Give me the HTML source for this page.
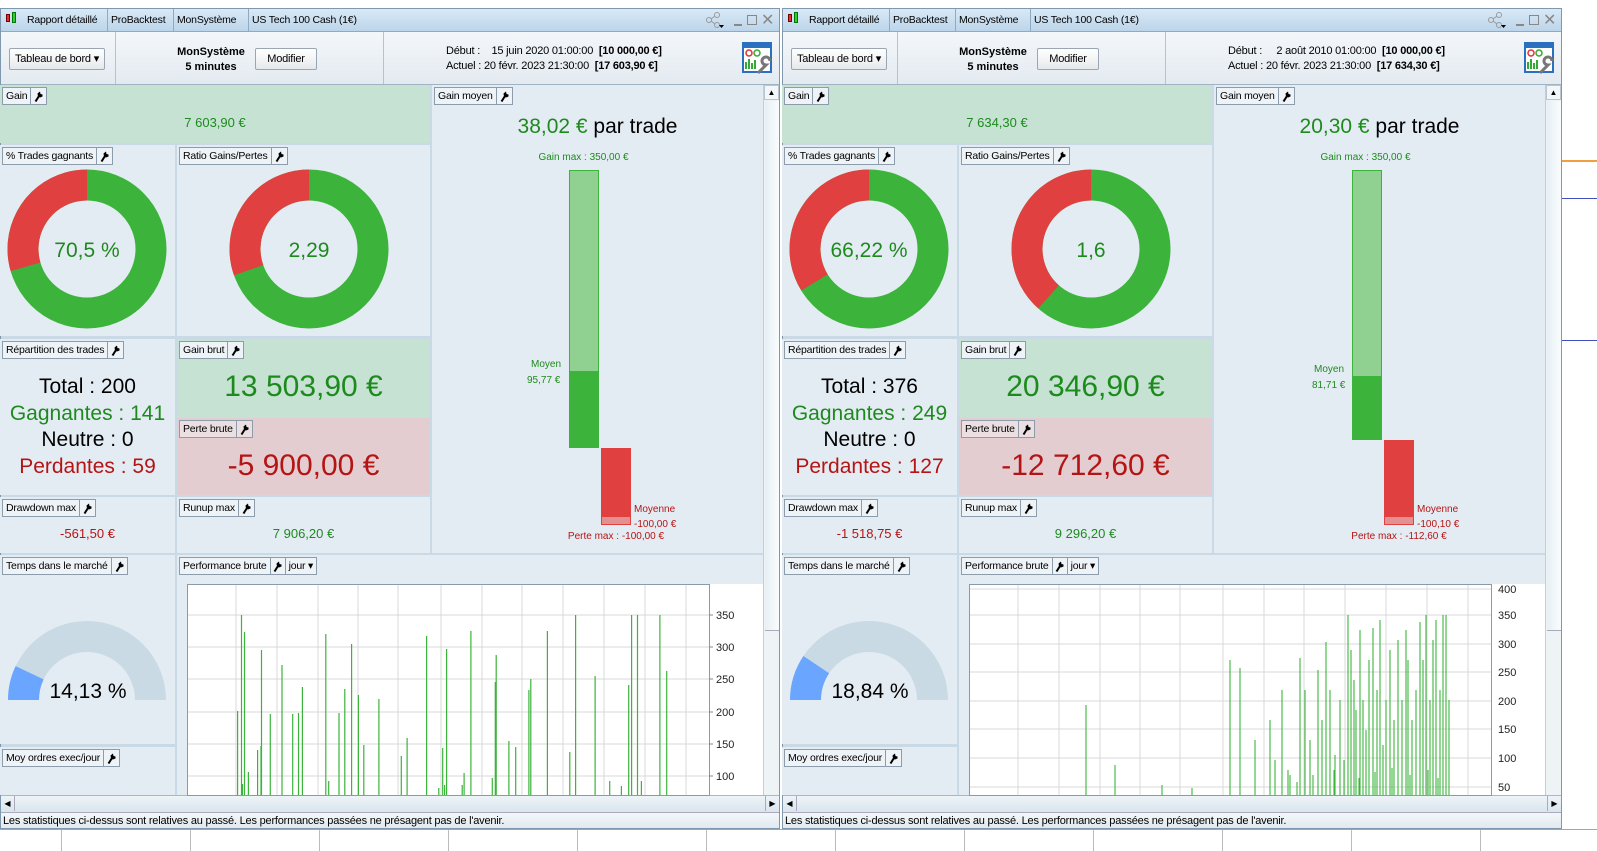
<!DOCTYPE html>
<html><head><meta charset="utf-8"><style>
*{margin:0;padding:0;box-sizing:border-box}
body{width:1597px;height:851px;position:relative;overflow:hidden;background:#fff;font-family:"Liberation Sans",sans-serif;font-size:11px;color:#000}
.a{position:absolute}
.w{position:absolute;top:8px;width:780px;height:821px;background:#c9d9e5;border:1px solid #7f98ae}
.tb{position:absolute;left:0;top:0;width:100%;height:23px;background:linear-gradient(#d8e9f7,#bcd5ea);border-bottom:1px solid #90aac0}
.tab{position:absolute;top:0;height:22px;line-height:22px;border-right:1px solid #90aac0;padding:0 3px;font-size:10.5px;letter-spacing:-0.2px;white-space:nowrap}
.tool{position:absolute;left:0;top:23px;width:100%;height:53px;background:linear-gradient(#f4f7fa,#e3eaf0);border-bottom:1px solid #9fb3c4}
.p{position:absolute;background:#e4ecf3}
.lb{position:absolute;left:2px;top:2px;height:18px;border:1px solid #8c9cab;background:#eef3f7;display:flex;line-height:16px;white-space:nowrap;font-size:10.5px;letter-spacing:-0.2px}
.lb span{padding:0 3px;border-right:1px solid #8c9cab}
.lb i{width:15px;display:flex;align-items:center;justify-content:center}
.c{position:absolute;text-align:center;white-space:nowrap}
.g{color:#1e8a1e}.r{color:#b51414}
.btn{position:absolute;border:1px solid #9aa7b2;border-radius:2px;background:linear-gradient(#fff,#e6e9ec);height:22px;line-height:20px;text-align:center;letter-spacing:-0.2px}
</style></head><body>

<div class="a" style="left:0;top:829px;width:1597px;height:1px;background:#9aa"></div>
<div class="a" style="left:0;top:830px;width:1597px;height:21px;background:repeating-linear-gradient(90deg,#fff 0 61px,#bbb 61px 62px,#fff 62px 129px)"></div>
<div class="a" style="left:1562px;top:160px;width:35px;height:2px;background:#f0a040"></div>
<div class="a" style="left:1562px;top:198px;width:35px;height:1px;background:#4050c0"></div>
<div class="a" style="left:1562px;top:340px;width:35px;height:1px;background:#4050c0"></div>

<div class="w" style="left:0">
 <div class="tb">
  <div class="a" style="left:5px;top:5px;width:4px;height:8px;background:#d33;border:1px solid #700"></div>
  <div class="a" style="left:11px;top:3px;width:4px;height:11px;background:#3c3;border:1px solid #070"></div>
  <div class="tab" style="left:23px;width:84px">Rapport détaillé</div>
  <div class="tab" style="left:107px;width:66px">ProBacktest</div>
  <div class="tab" style="left:173px;width:75px">MonSystème</div>
  <div class="tab" style="left:248px;border:0">US Tech 100 Cash (1€)</div>
  <svg class="a" style="left:704px;top:3px" width="20" height="16"><circle cx="4" cy="8" r="2.5" fill="none" stroke="#999"/><circle cx="12" cy="3" r="2.5" fill="none" stroke="#999"/><circle cx="12" cy="13" r="2.5" fill="none" stroke="#999"/><path d="M6 7L10 4M6 9L10 12" stroke="#999"/><path d="M14 13h5l-2.5 3z" fill="#000"/></svg>
  <div class="a" style="left:733px;top:15px;width:8px;height:2px;background:#888"></div>
  <div class="a" style="left:746px;top:6px;width:10px;height:10px;border:1px solid #888"></div>
  <div class="a" style="left:760px;top:1px;font-size:16px;color:#888">✕</div>
 </div>
 <div class="tool">
  <div class="btn" style="left:8px;top:16px;width:96px">Tableau de bord ▾</div>
  <div class="a" style="left:114px;top:0;width:1px;height:52px;background:#b5c3cf"></div>
  <div class="c" style="left:170px;top:13px;width:80px;font-weight:bold;line-height:15px">MonSystème<br>5 minutes</div>
  <div class="btn" style="left:254px;top:16px;width:62px">Modifier</div>
  <div class="a" style="left:382px;top:0;width:1px;height:52px;background:#b5c3cf"></div>
  <div class="a" style="left:445px;top:12px;line-height:15px;white-space:nowrap;letter-spacing:-0.2px">Début :&nbsp;&nbsp;&nbsp;&nbsp;15 juin 2020 01:00:00&nbsp; <b>[10 000,00 €]</b><br>Actuel : 20 févr. 2023 21:30:00&nbsp; <b>[17 603,90 €]</b></div>
  <svg class="a" style="left:741px;top:10px" width="32" height="34"><rect x="1" y="1" width="28" height="29" fill="#fff" stroke="#2a6fc0" stroke-width="2"/><rect x="1" y="1" width="28" height="5" fill="#2a6fc0"/><circle cx="7" cy="11" r="3" fill="none" stroke="#d33" stroke-width="1.5"/><circle cx="15" cy="11" r="3" fill="none" stroke="#3a3" stroke-width="1.5"/><path d="M4 27V20M7 27V17M10 27V21M13 27V18" stroke="#3a3" stroke-width="2"/><path d="M16 31l8-8a4 4 0 1 1 4-4" stroke="#777" stroke-width="3" fill="none"/></svg>
 </div>
</div>

<div class="w" style="left:782px;width:780px">
 <div class="tb">
  <div class="a" style="left:5px;top:5px;width:4px;height:8px;background:#d33;border:1px solid #700"></div>
  <div class="a" style="left:11px;top:3px;width:4px;height:11px;background:#3c3;border:1px solid #070"></div>
  <div class="tab" style="left:23px;width:84px">Rapport détaillé</div>
  <div class="tab" style="left:107px;width:66px">ProBacktest</div>
  <div class="tab" style="left:173px;width:75px">MonSystème</div>
  <div class="tab" style="left:248px;border:0">US Tech 100 Cash (1€)</div>
  <svg class="a" style="left:704px;top:3px" width="20" height="16"><circle cx="4" cy="8" r="2.5" fill="none" stroke="#999"/><circle cx="12" cy="3" r="2.5" fill="none" stroke="#999"/><circle cx="12" cy="13" r="2.5" fill="none" stroke="#999"/><path d="M6 7L10 4M6 9L10 12" stroke="#999"/><path d="M14 13h5l-2.5 3z" fill="#000"/></svg>
  <div class="a" style="left:733px;top:15px;width:8px;height:2px;background:#888"></div>
  <div class="a" style="left:746px;top:6px;width:10px;height:10px;border:1px solid #888"></div>
  <div class="a" style="left:760px;top:1px;font-size:16px;color:#888">✕</div>
 </div>
 <div class="tool">
  <div class="btn" style="left:8px;top:16px;width:96px">Tableau de bord ▾</div>
  <div class="a" style="left:114px;top:0;width:1px;height:52px;background:#b5c3cf"></div>
  <div class="c" style="left:170px;top:13px;width:80px;font-weight:bold;line-height:15px">MonSystème<br>5 minutes</div>
  <div class="btn" style="left:254px;top:16px;width:62px">Modifier</div>
  <div class="a" style="left:382px;top:0;width:1px;height:52px;background:#b5c3cf"></div>
  <div class="a" style="left:445px;top:12px;line-height:15px;white-space:nowrap;letter-spacing:-0.2px">Début :&nbsp;&nbsp;&nbsp;&nbsp;&nbsp;2 août 2010 01:00:00&nbsp; <b>[10 000,00 €]</b><br>Actuel : 20 févr. 2023 21:30:00&nbsp; <b>[17 634,30 €]</b></div>
  <svg class="a" style="left:741px;top:10px" width="32" height="34"><rect x="1" y="1" width="28" height="29" fill="#fff" stroke="#2a6fc0" stroke-width="2"/><rect x="1" y="1" width="28" height="5" fill="#2a6fc0"/><circle cx="7" cy="11" r="3" fill="none" stroke="#d33" stroke-width="1.5"/><circle cx="15" cy="11" r="3" fill="none" stroke="#3a3" stroke-width="1.5"/><path d="M4 27V20M7 27V17M10 27V21M13 27V18" stroke="#3a3" stroke-width="2"/><path d="M16 31l8-8a4 4 0 1 1 4-4" stroke="#777" stroke-width="3" fill="none"/></svg>
 </div>
</div>

<div class="a" style="left:0;top:0;width:780px;height:851px">
 <div class="p" style="left:0;top:85px;width:430px;height:58px;background:#c5e2d3"><div class="lb"><span>Gain</span><i><svg width="9" height="11"><path d="M1.5 10.5L5 5" stroke="#000" stroke-width="2"/><path d="M4 5.5L3.5 2.5L6 0.5L6.5 3L8.5 3.5L8.5 5.5L6 6.5Z" fill="#000"/></svg></i></div><div class="c g" style="left:0;width:430px;top:30px;font-size:13px">7 603,90 €</div></div>
 <div class="p" style="left:432px;top:85px;width:331px;height:468px"><div class="lb"><span>Gain moyen</span><i><svg width="9" height="11"><path d="M1.5 10.5L5 5" stroke="#000" stroke-width="2"/><path d="M4 5.5L3.5 2.5L6 0.5L6.5 3L8.5 3.5L8.5 5.5L6 6.5Z" fill="#000"/></svg></i></div><div class="c" style="left:0;width:331px;top:30px;font-size:21px"><span class="g">38,02 €</span> par trade</div><div class="c g" style="left:100px;width:103px;top:67px;font-size:10px">Gain max : 350,00 €</div></div>
 <div class="p" style="left:0;top:145px;width:175px;height:191px"><div class="lb"><span>% Trades gagnants</span><i><svg width="9" height="11"><path d="M1.5 10.5L5 5" stroke="#000" stroke-width="2"/><path d="M4 5.5L3.5 2.5L6 0.5L6.5 3L8.5 3.5L8.5 5.5L6 6.5Z" fill="#000"/></svg></i></div></div>
 <div class="p" style="left:177px;top:145px;width:253px;height:191px"><div class="lb"><span>Ratio Gains/Pertes</span><i><svg width="9" height="11"><path d="M1.5 10.5L5 5" stroke="#000" stroke-width="2"/><path d="M4 5.5L3.5 2.5L6 0.5L6.5 3L8.5 3.5L8.5 5.5L6 6.5Z" fill="#000"/></svg></i></div></div>
 <div class="p" style="left:0;top:339px;width:175px;height:156px"><div class="lb"><span>Répartition des trades</span><i><svg width="9" height="11"><path d="M1.5 10.5L5 5" stroke="#000" stroke-width="2"/><path d="M4 5.5L3.5 2.5L6 0.5L6.5 3L8.5 3.5L8.5 5.5L6 6.5Z" fill="#000"/></svg></i></div>
  <div class="c" style="left:0;width:175px;top:35px;font-size:21px;line-height:26.5px">Total : 200<br><span class="g">Gagnantes : 141</span><br>Neutre : 0<br><span class="r">Perdantes : 59</span></div></div>
 <div class="p" style="left:177px;top:339px;width:253px;height:79px;background:#c5e2d3"><div class="lb"><span>Gain brut</span><i><svg width="9" height="11"><path d="M1.5 10.5L5 5" stroke="#000" stroke-width="2"/><path d="M4 5.5L3.5 2.5L6 0.5L6.5 3L8.5 3.5L8.5 5.5L6 6.5Z" fill="#000"/></svg></i></div><div class="c g" style="left:0;width:253px;top:31px;font-size:30px">13 503,90 €</div></div>
 <div class="p" style="left:177px;top:418px;width:253px;height:77px;background:#e3cdd1"><div class="lb" style="background:#ecdfe2"><span>Perte brute</span><i><svg width="9" height="11"><path d="M1.5 10.5L5 5" stroke="#000" stroke-width="2"/><path d="M4 5.5L3.5 2.5L6 0.5L6.5 3L8.5 3.5L8.5 5.5L6 6.5Z" fill="#000"/></svg></i></div><div class="c r" style="left:0;width:253px;top:31px;font-size:30px">-5 900,00 €</div></div>
 <div class="p" style="left:0;top:497px;width:175px;height:56px"><div class="lb"><span>Drawdown max</span><i><svg width="9" height="11"><path d="M1.5 10.5L5 5" stroke="#000" stroke-width="2"/><path d="M4 5.5L3.5 2.5L6 0.5L6.5 3L8.5 3.5L8.5 5.5L6 6.5Z" fill="#000"/></svg></i></div><div class="c r" style="left:0;width:175px;top:29px;font-size:13px">-561,50 €</div></div>
 <div class="p" style="left:177px;top:497px;width:253px;height:56px"><div class="lb"><span>Runup max</span><i><svg width="9" height="11"><path d="M1.5 10.5L5 5" stroke="#000" stroke-width="2"/><path d="M4 5.5L3.5 2.5L6 0.5L6.5 3L8.5 3.5L8.5 5.5L6 6.5Z" fill="#000"/></svg></i></div><div class="c g" style="left:0;width:253px;top:29px;font-size:13px">7 906,20 €</div></div>
 <div class="p" style="left:0;top:555px;width:175px;height:189px"><div class="lb"><span>Temps dans le marché</span><i><svg width="9" height="11"><path d="M1.5 10.5L5 5" stroke="#000" stroke-width="2"/><path d="M4 5.5L3.5 2.5L6 0.5L6.5 3L8.5 3.5L8.5 5.5L6 6.5Z" fill="#000"/></svg></i></div></div>
 <div class="p" style="left:0;top:747px;width:175px;height:48px"><div class="lb"><span>Moy ordres exec/jour</span><i><svg width="9" height="11"><path d="M1.5 10.5L5 5" stroke="#000" stroke-width="2"/><path d="M4 5.5L3.5 2.5L6 0.5L6.5 3L8.5 3.5L8.5 5.5L6 6.5Z" fill="#000"/></svg></i></div></div>
 <div class="p" style="left:177px;top:555px;width:586px;height:240px"><div class="lb"><span>Performance brute</span><i style="border-right:1px solid #8c9cab"><svg width="9" height="11"><path d="M1.5 10.5L5 5" stroke="#000" stroke-width="2"/><path d="M4 5.5L3.5 2.5L6 0.5L6.5 3L8.5 3.5L8.5 5.5L6 6.5Z" fill="#000"/></svg></i><span style="border:0">jour ▾</span></div></div>
 <div class="a" style="left:763px;top:85px;width:16px;height:710px;background:#eef3f6;border-left:1px solid #c2cfda"><div class="a" style="left:0;top:0;width:15px;height:15px;background:#f4f7f9;border:1px solid #b9c6d1;font-size:8px;text-align:center;line-height:13px">▲</div><div class="a" style="left:1px;top:16px;width:14px;height:530px;background:linear-gradient(90deg,#e7f0f5,#fafcfd);border-bottom:1px solid #aab"></div></div>
 <div class="a" style="left:1px;top:795px;width:778px;height:17px;background:linear-gradient(#eef4f8,#d9e5ee);border-top:1px solid #a8b8c6"><div class="a" style="left:0;top:0;width:14px;height:15px;font-size:8px;line-height:15px;text-align:center;border-right:1px solid #aab">◀</div><div class="a" style="right:0;top:0;width:14px;height:15px;font-size:8px;line-height:15px;text-align:center;border-left:1px solid #aab">▶</div></div>
 <div class="a" style="left:1px;top:812px;width:778px;height:16px;background:linear-gradient(#f3f7fa,#e1e9ef);line-height:16px;padding-left:2px;border-top:1px solid #aab;letter-spacing:-0.2px">Les statistiques ci-dessus sont relatives au passé. Les performances passées ne présagent pas de l'avenir.</div>
</div>

<div class="a" style="left:782px;top:0;width:780px;height:851px">
 <div class="p" style="left:0;top:85px;width:430px;height:58px;background:#c5e2d3"><div class="lb"><span>Gain</span><i><svg width="9" height="11"><path d="M1.5 10.5L5 5" stroke="#000" stroke-width="2"/><path d="M4 5.5L3.5 2.5L6 0.5L6.5 3L8.5 3.5L8.5 5.5L6 6.5Z" fill="#000"/></svg></i></div><div class="c g" style="left:0;width:430px;top:30px;font-size:13px">7 634,30 €</div></div>
 <div class="p" style="left:432px;top:85px;width:331px;height:468px"><div class="lb"><span>Gain moyen</span><i><svg width="9" height="11"><path d="M1.5 10.5L5 5" stroke="#000" stroke-width="2"/><path d="M4 5.5L3.5 2.5L6 0.5L6.5 3L8.5 3.5L8.5 5.5L6 6.5Z" fill="#000"/></svg></i></div><div class="c" style="left:0;width:331px;top:30px;font-size:21px"><span class="g">20,30 €</span> par trade</div><div class="c g" style="left:100px;width:103px;top:67px;font-size:10px">Gain max : 350,00 €</div></div>
 <div class="p" style="left:0;top:145px;width:175px;height:191px"><div class="lb"><span>% Trades gagnants</span><i><svg width="9" height="11"><path d="M1.5 10.5L5 5" stroke="#000" stroke-width="2"/><path d="M4 5.5L3.5 2.5L6 0.5L6.5 3L8.5 3.5L8.5 5.5L6 6.5Z" fill="#000"/></svg></i></div></div>
 <div class="p" style="left:177px;top:145px;width:253px;height:191px"><div class="lb"><span>Ratio Gains/Pertes</span><i><svg width="9" height="11"><path d="M1.5 10.5L5 5" stroke="#000" stroke-width="2"/><path d="M4 5.5L3.5 2.5L6 0.5L6.5 3L8.5 3.5L8.5 5.5L6 6.5Z" fill="#000"/></svg></i></div></div>
 <div class="p" style="left:0;top:339px;width:175px;height:156px"><div class="lb"><span>Répartition des trades</span><i><svg width="9" height="11"><path d="M1.5 10.5L5 5" stroke="#000" stroke-width="2"/><path d="M4 5.5L3.5 2.5L6 0.5L6.5 3L8.5 3.5L8.5 5.5L6 6.5Z" fill="#000"/></svg></i></div>
  <div class="c" style="left:0;width:175px;top:35px;font-size:21px;line-height:26.5px">Total : 376<br><span class="g">Gagnantes : 249</span><br>Neutre : 0<br><span class="r">Perdantes : 127</span></div></div>
 <div class="p" style="left:177px;top:339px;width:253px;height:79px;background:#c5e2d3"><div class="lb"><span>Gain brut</span><i><svg width="9" height="11"><path d="M1.5 10.5L5 5" stroke="#000" stroke-width="2"/><path d="M4 5.5L3.5 2.5L6 0.5L6.5 3L8.5 3.5L8.5 5.5L6 6.5Z" fill="#000"/></svg></i></div><div class="c g" style="left:0;width:253px;top:31px;font-size:30px">20 346,90 €</div></div>
 <div class="p" style="left:177px;top:418px;width:253px;height:77px;background:#e3cdd1"><div class="lb" style="background:#ecdfe2"><span>Perte brute</span><i><svg width="9" height="11"><path d="M1.5 10.5L5 5" stroke="#000" stroke-width="2"/><path d="M4 5.5L3.5 2.5L6 0.5L6.5 3L8.5 3.5L8.5 5.5L6 6.5Z" fill="#000"/></svg></i></div><div class="c r" style="left:0;width:253px;top:31px;font-size:30px">-12 712,60 €</div></div>
 <div class="p" style="left:0;top:497px;width:175px;height:56px"><div class="lb"><span>Drawdown max</span><i><svg width="9" height="11"><path d="M1.5 10.5L5 5" stroke="#000" stroke-width="2"/><path d="M4 5.5L3.5 2.5L6 0.5L6.5 3L8.5 3.5L8.5 5.5L6 6.5Z" fill="#000"/></svg></i></div><div class="c r" style="left:0;width:175px;top:29px;font-size:13px">-1 518,75 €</div></div>
 <div class="p" style="left:177px;top:497px;width:253px;height:56px"><div class="lb"><span>Runup max</span><i><svg width="9" height="11"><path d="M1.5 10.5L5 5" stroke="#000" stroke-width="2"/><path d="M4 5.5L3.5 2.5L6 0.5L6.5 3L8.5 3.5L8.5 5.5L6 6.5Z" fill="#000"/></svg></i></div><div class="c g" style="left:0;width:253px;top:29px;font-size:13px">9 296,20 €</div></div>
 <div class="p" style="left:0;top:555px;width:175px;height:189px"><div class="lb"><span>Temps dans le marché</span><i><svg width="9" height="11"><path d="M1.5 10.5L5 5" stroke="#000" stroke-width="2"/><path d="M4 5.5L3.5 2.5L6 0.5L6.5 3L8.5 3.5L8.5 5.5L6 6.5Z" fill="#000"/></svg></i></div></div>
 <div class="p" style="left:0;top:747px;width:175px;height:48px"><div class="lb"><span>Moy ordres exec/jour</span><i><svg width="9" height="11"><path d="M1.5 10.5L5 5" stroke="#000" stroke-width="2"/><path d="M4 5.5L3.5 2.5L6 0.5L6.5 3L8.5 3.5L8.5 5.5L6 6.5Z" fill="#000"/></svg></i></div></div>
 <div class="p" style="left:177px;top:555px;width:586px;height:240px"><div class="lb"><span>Performance brute</span><i style="border-right:1px solid #8c9cab"><svg width="9" height="11"><path d="M1.5 10.5L5 5" stroke="#000" stroke-width="2"/><path d="M4 5.5L3.5 2.5L6 0.5L6.5 3L8.5 3.5L8.5 5.5L6 6.5Z" fill="#000"/></svg></i><span style="border:0">jour ▾</span></div></div>
 <div class="a" style="left:763px;top:85px;width:16px;height:710px;background:#eef3f6;border-left:1px solid #c2cfda"><div class="a" style="left:0;top:0;width:15px;height:15px;background:#f4f7f9;border:1px solid #b9c6d1;font-size:8px;text-align:center;line-height:13px">▲</div><div class="a" style="left:1px;top:16px;width:14px;height:530px;background:linear-gradient(90deg,#e7f0f5,#fafcfd);border-bottom:1px solid #aab"></div></div>
 <div class="a" style="left:1px;top:795px;width:778px;height:17px;background:linear-gradient(#eef4f8,#d9e5ee);border-top:1px solid #a8b8c6"><div class="a" style="left:0;top:0;width:14px;height:15px;font-size:8px;line-height:15px;text-align:center;border-right:1px solid #aab">◀</div><div class="a" style="right:0;top:0;width:14px;height:15px;font-size:8px;line-height:15px;text-align:center;border-left:1px solid #aab">▶</div></div>
 <div class="a" style="left:1px;top:812px;width:778px;height:16px;background:linear-gradient(#f3f7fa,#e1e9ef);line-height:16px;padding-left:2px;border-top:1px solid #aab;letter-spacing:-0.2px">Les statistiques ci-dessus sont relatives au passé. Les performances passées ne présagent pas de l'avenir.</div>
</div>

<svg class="a" style="left:0;top:0" width="780" height="851">
 <g fill="none" stroke-width="31">
  <circle cx="87" cy="249" r="64" stroke="#3cb43c"/>
  <circle cx="87" cy="249" r="64" stroke="#e04040" stroke-dasharray="118.6 500" transform="rotate(-196.2 87 249)"/>
  <circle cx="309" cy="249" r="64" stroke="#3cb43c"/>
  <circle cx="309" cy="249" r="64" stroke="#e04040" stroke-dasharray="122.2 500" transform="rotate(-199.4 309 249)"/>
  <path d="M23.5 700A63.5 63.5 0 0 1 150.5 700" stroke="#c9dae5"/>
  <path d="M23.5 700A63.5 63.5 0 0 1 29.6 672.8" stroke="#6aa6ff"/>
 </g>
 <g font-size="21" text-anchor="middle" font-family="Liberation Sans">
  <text x="87" y="257" fill="#1e8a1e">70,5 %</text>
  <text x="309" y="257" fill="#1e8a1e">2,29</text>
  <text x="88" y="698">14,13 %</text>
 </g>
 <rect x="569.5" y="170.5" width="29" height="201" fill="#90d090" stroke="#3cb43c"/>
 <rect x="569" y="371" width="30" height="77" fill="#3cb43c"/>
 <rect x="601" y="448" width="30" height="69" fill="#e04040"/>
 <rect x="601.5" y="516.5" width="29" height="8" fill="#e39090" stroke="#e04040"/>
 <g font-size="10" font-family="Liberation Sans">
  <text x="531" y="367" fill="#1e8a1e">Moyen</text>
  <text x="527" y="383" fill="#1e8a1e">95,77 €</text>
  <text x="634" y="512" fill="#b51414">Moyenne</text>
  <text x="634" y="527" fill="#b51414">-100,00 €</text>
  <text x="616" y="539" fill="#b51414" text-anchor="middle">Perte max : -100,00 €</text>
 </g>
 <rect x="187" y="584" width="576" height="211" fill="#fff"/>
 <rect x="187.5" y="584.5" width="522" height="211" fill="none" stroke="#8a9aa6"/>
 <g stroke="#d8d8d8">
  <path d="M236 585V795M277 585V795M318 585V795M358 585V795M398 585V795M441 585V795M482 585V795M522 585V795M563 585V795M604 585V795M645 585V795M686 585V795"/>
  <path d="M188 615H709M188 647H709M188 679H709M188 712H709M188 744H709M188 776H709"/>
 </g>
 <g stroke="#888"><path d="M709 615h4M709 647h4M709 679h4M709 712h4M709 744h4M709 776h4"/></g>
 <g font-size="11" font-family="Liberation Sans" fill="#222">
  <text x="716" y="619">350</text><text x="716" y="651">300</text><text x="716" y="683">250</text><text x="716" y="716">200</text><text x="716" y="748">150</text><text x="716" y="780">100</text>
 </g>
 <g stroke="#3cb43c" stroke-width="1.2">
  <path d="M237.6 795V711M241.5 795V615M244.5 795V632M242.5 795V784M248.4 795V772M257.6 795V750M261 795V746M261.5 795V650M270.3 795V714M282 795V665M292.7 795V714M298.5 795V713M302.4 795V687M325.8 795V634M328.7 795V781M339 795V713M344.8 795V689M351.6 795V644M358.4 795V695M363.8 795V745M378.9 795V699M401.3 795V756M407.1 795V738M426.6 795V636M438.8 795V788M442.7 795V748M444.6 795V785M446.6 795V649M462.2 795V785M464.1 795V773M470.9 795V631M492.3 795V778M495.3 795V682M496.2 795V655M508.9 795V741M515.7 795V747M528.9 795V690M530.8 795V679M547.4 795V631M569.8 795V752M575.6 795V615M595.1 795V676M609.7 795V781M621.4 795V786M628.7 795V685M631.6 795V615M637.5 795V615M641.4 795V781M659.9 795V615M666.7 795V671"/>
 </g>
</svg>

<svg class="a" style="left:782px;top:0" width="780" height="851">
 <g fill="none" stroke-width="31">
  <circle cx="87" cy="249" r="64" stroke="#3cb43c"/>
  <circle cx="87" cy="249" r="64" stroke="#e04040" stroke-dasharray="135.8 500" transform="rotate(-211.6 87 249)"/>
  <circle cx="309" cy="249" r="64" stroke="#3cb43c"/>
  <circle cx="309" cy="249" r="64" stroke="#e04040" stroke-dasharray="154.7 500" transform="rotate(-228.5 309 249)"/>
  <path d="M23.5 700A63.5 63.5 0 0 1 150.5 700" stroke="#c9dae5"/>
  <path d="M23.5 700A63.5 63.5 0 0 1 34.3 664.6" stroke="#6aa6ff"/>
 </g>
 <g font-size="21" text-anchor="middle" font-family="Liberation Sans">
  <text x="87" y="257" fill="#1e8a1e">66,22 %</text>
  <text x="309" y="257" fill="#1e8a1e">1,6</text>
  <text x="88" y="698">18,84 %</text>
 </g>
 <rect x="570.5" y="170.5" width="29" height="206" fill="#90d090" stroke="#3cb43c"/>
 <rect x="570" y="376" width="30" height="64" fill="#3cb43c"/>
 <rect x="602" y="440" width="30" height="77" fill="#e04040"/>
 <rect x="602.5" y="516.5" width="29" height="8" fill="#e39090" stroke="#e04040"/>
 <g font-size="10" font-family="Liberation Sans">
  <text x="532" y="372" fill="#1e8a1e">Moyen</text>
  <text x="530" y="388" fill="#1e8a1e">81,71 €</text>
  <text x="635" y="512" fill="#b51414">Moyenne</text>
  <text x="635" y="527" fill="#b51414">-100,10 €</text>
  <text x="617" y="539" fill="#b51414" text-anchor="middle">Perte max : -112,60 €</text>
 </g>
 <rect x="187" y="584" width="576" height="211" fill="#fff"/>
 <rect x="187.5" y="584.5" width="522" height="211" fill="none" stroke="#8a9aa6"/>
 <g stroke="#d8d8d8">
  <path d="M236 585V795M277 585V795M318 585V795M358 585V795M398 585V795M441 585V795M482 585V795M522 585V795M563 585V795M604 585V795M645 585V795M686 585V795"/>
  <path d="M188 589H709M188 615H709M188 644H709M188 672H709M188 701H709M188 729H709M188 758H709M188 787H709"/>
 </g>
 <g font-size="11" font-family="Liberation Sans" fill="#222">
  <text x="716" y="593">400</text><text x="716" y="619">350</text><text x="716" y="648">300</text><text x="716" y="676">250</text><text x="716" y="705">200</text><text x="716" y="733">150</text><text x="716" y="762">100</text><text x="716" y="791">50</text>
 </g>
 <g stroke="#3cb43c" stroke-width="1.1">
  <path d="M304 795V705M333 795V765M380 795V785M410 795V788M448 795V660M458 795V668M473 795V740M488 795V720M493 795V760M500 795V690M508 795V775M518 795V658M523 795V690M528 795V740M536 795V670M540 795V720M544 795V642M548 795V690M553 795V755M558 795V700M562 795V760M566 795V615M569 795V650M572 795V680M574 795V710M578 795V630M581 795V700M584 795V730M587 795V660M591 795V628M595 795V690M598 795V620M601 795V745M604 795V700M608 795V650M612 795V720M616 795V640M620 795V700M624 795V630M626 795V660M630 795V720M634 795V690M638 795V622M641 795V660M644 795V615M648 795V700M651 795V640M654 795V620M658 795V690M661 795V615M664 795V615M667 795V700M506 795V770M515 795V782M531 795V775M552 795V770M577 795V778M593 795V772M610 795V768M628 795V775M646 795V770M656 795V778"/>
 </g>
</svg>
</body></html>
